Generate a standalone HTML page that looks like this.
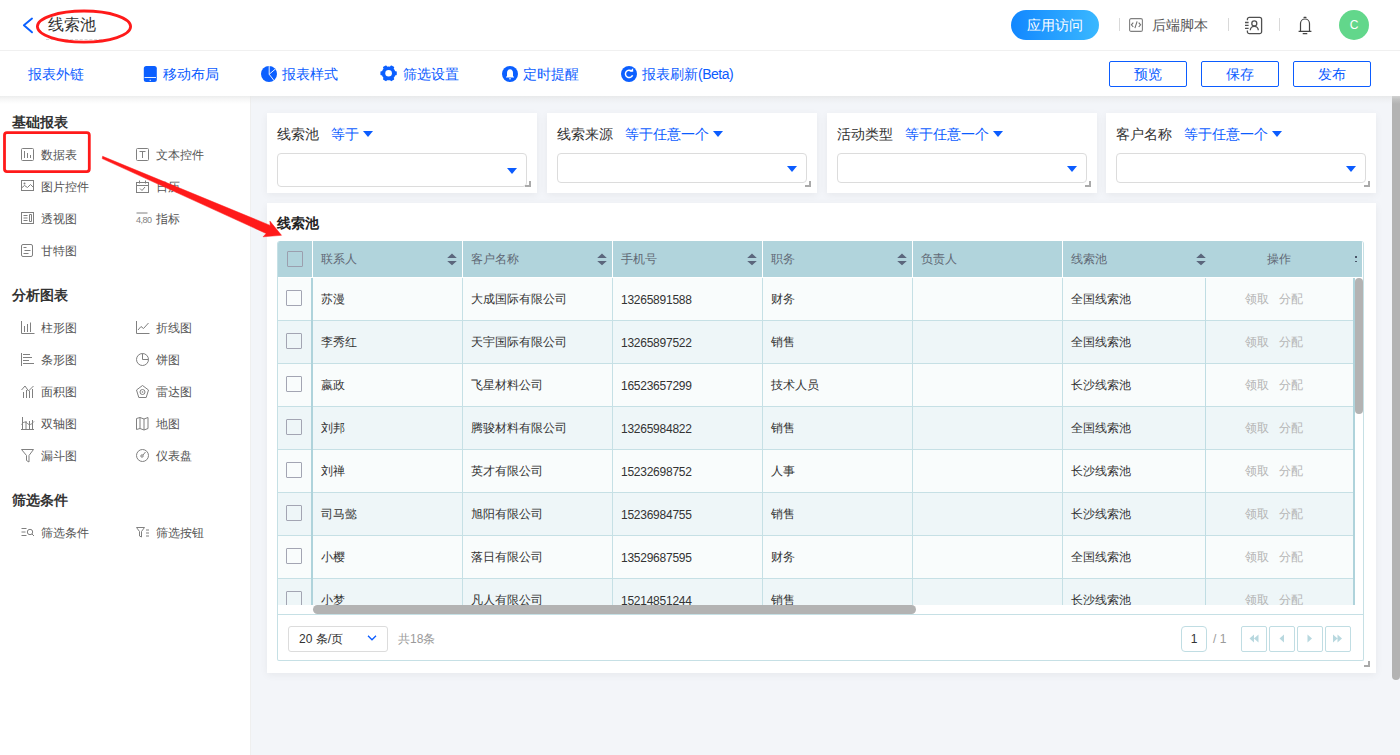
<!DOCTYPE html>
<html><head><meta charset="utf-8">
<style>
*{box-sizing:border-box;margin:0;padding:0}
html,body{width:1400px;height:755px;overflow:hidden}
body{position:relative;background:#f3f5f9;font-family:"Liberation Sans",sans-serif;color:#333;font-size:12px}
.a{position:absolute;white-space:nowrap}
#hdr{left:0;top:0;width:1400px;height:51px;background:#fff;border-bottom:1px solid #f0f0f0}
#tb{left:0;top:51px;width:1400px;height:45px;background:#fff;z-index:2}
#tbs{left:0;top:96px;width:1400px;height:8px;z-index:3;background:linear-gradient(rgba(226,227,227,0.65),rgba(226,227,227,0.3) 40%,rgba(226,227,227,0))}
#side{left:0;top:96px;width:251px;height:659px;background:#fff;border-right:1px solid #efefef}
.tbt{font-size:14px;color:#0b5cff;line-height:20px;top:13px}
.btn{top:10px;width:78px;height:26px;border:1px solid #0b5cff;border-radius:2px;font-size:14px;color:#0b5cff;text-align:center;line-height:24px}
.sec{font-size:14px;font-weight:bold;color:#333;line-height:20px;left:12px}
.it{font-size:12px;color:#555;line-height:16px}
svg{overflow:visible}
.card{background:#fff;box-shadow:0 2px 8px rgba(0,0,0,0.055)}
</style></head><body>

<!-- header -->
<div id="hdr" class="a">
  <svg class="a" style="left:22px;top:17px" width="12" height="17" viewBox="0 0 12 17"><path d="M10 1.6 L1.9 8.3 L10 15.3" fill="none" stroke="#0b60ff" stroke-width="1.9" stroke-linecap="round" stroke-linejoin="round"/></svg>
  <div class="a" style="left:48px;top:14px;font-size:16px;line-height:22px;color:#333">线索池</div>
  <div class="a" style="left:46px;top:39px;width:56px;border-top:1px dashed #d8d8d8"></div>
  <div class="a" style="left:1011px;top:10px;width:88px;height:30px;border-radius:15px;background:linear-gradient(90deg,#1287ff,#3ab8ff);color:#fff;font-size:14px;line-height:30px;text-align:center">应用访问</div>
  <div class="a" style="left:1119px;top:18px;width:1px;height:13px;background:#d9d9d9"></div>
  <div class="a" style="left:1152px;top:15px;font-size:14px;line-height:20px;color:#555">后端脚本</div>
  <div class="a" style="left:1228px;top:18px;width:1px;height:13px;background:#d9d9d9"></div>
  <div class="a" style="left:1279px;top:18px;width:1px;height:13px;background:#d9d9d9"></div>

  <svg class="a" style="left:1129px;top:18px" width="14" height="14" viewBox="0 0 14 14"><rect x="0.6" y="0.6" width="12.8" height="12.8" rx="1.5" fill="none" stroke="#808080" stroke-width="1.1"/><path d="M4.3 4.6L2.4 6.8L4.3 9M9.7 4.6L11.6 6.8L9.7 9M8.1 3.4L5.9 10.2" fill="none" stroke="#707070" stroke-width="1.1"/></svg>
  <svg class="a" style="left:1244px;top:16px" width="19" height="19" viewBox="0 0 19 19"><path d="M3.4 4.2V3.3A2 2 0 0 1 5.4 1.3H15.6A2 2 0 0 1 17.6 3.3V15.7A2 2 0 0 1 15.6 17.7H5.4A2 2 0 0 1 3.4 15.7V14.6" fill="none" stroke="#505050" stroke-width="1.3"/><path d="M1 6.5H4.6M1 9.4H4.6M1 12.3H4.6" stroke="#505050" stroke-width="1.3"/><circle cx="10.3" cy="7.4" r="2.5" fill="none" stroke="#505050" stroke-width="1.3"/><path d="M6.3 14.3A4 4 0 0 1 14.3 14.3" fill="none" stroke="#505050" stroke-width="1.3"/></svg>
  <svg class="a" style="left:1297px;top:16px" width="16" height="19" viewBox="0 0 16 19"><path d="M7 1.3h2" stroke="#444" stroke-width="1.2" stroke-linecap="round"/><path d="M3.5 14.8V7.5A4.5 4.5 0 0 1 12.5 7.5V14.8M1.6 15.3H14.4" fill="none" stroke="#444" stroke-width="1.2"/><path d="M6.2 17.7h3.6" stroke="#444" stroke-width="1.2" stroke-linecap="round"/></svg>
  <div class="a" style="left:1339px;top:10px;width:30px;height:30px;border-radius:50%;background:#62d78b;color:#fff;font-size:12px;line-height:30px;text-align:center">C</div>
</div>

<!-- toolbar -->
<div id="tb" class="a">

  <svg class="a" style="left:143px;top:15px" width="14" height="16" viewBox="0 0 14 16"><rect x="0.8" y="0" width="13" height="16" rx="2.5" fill="#0b5fff"/><path d="M1.5 11.5H13" stroke="#fff" stroke-width="0.9"/><path d="M6.6 14.3H8" stroke="#fff" stroke-width="0.9"/></svg>
  <svg class="a" style="left:261px;top:15px" width="16" height="16" viewBox="0 0 16 16"><circle cx="8" cy="8" r="8" fill="#0b5fff"/><path d="M8.2 0V8.3L14.2 3.2M8.2 8.3L13 14.5" fill="none" stroke="#fff" stroke-width="0.9"/></svg>
  <svg class="a" style="left:380px;top:15px" width="18" height="16" viewBox="0 0 18 16"><path d="M13.97 10.40 L14.62 8.80 L16.08 8.62 L16.08 5.98 L14.62 5.80 L13.97 4.20 L12.91 2.84 L13.49 1.48 L11.20 0.16 L10.31 1.34 L8.60 1.10 L6.89 1.34 L6.00 0.16 L3.71 1.48 L4.29 2.84 L3.23 4.20 L2.58 5.80 L1.12 5.98 L1.12 8.62 L2.58 8.80 L3.23 10.40 L4.29 11.76 L3.71 13.12 L6.00 14.44 L6.89 13.26 L8.60 13.50 L10.31 13.26 L11.20 14.44 L13.49 13.12 L12.91 11.76Z" fill="#0b5fff" stroke="#0b5fff" stroke-width="1.4" stroke-linejoin="round"/><circle cx="8.6" cy="7.3" r="3.3" fill="#fff"/></svg>
  <svg class="a" style="left:502px;top:15px" width="16" height="16" viewBox="0 0 16 16"><circle cx="8" cy="8" r="8" fill="#0b5fff"/><path d="M8 3.2C6 3.2 5 5 5 7V10.5H4V11.6H12V10.5H11V7C11 5 10 3.2 8 3.2Z" fill="#fff"/><rect x="7.1" y="12.3" width="1.8" height="1" fill="#fff"/></svg>
  <svg class="a" style="left:621px;top:15px" width="16" height="16" viewBox="0 0 16 16"><circle cx="8" cy="8" r="8" fill="#0b5fff"/><path d="M11.6 9.2A3.7 3.7 0 1 1 10.8 5.3" fill="none" stroke="#fff" stroke-width="1.5"/><path d="M8.4 5.5L12.2 5.7L12.1 2.2Z" fill="#fff"/></svg>
  <div class="a tbt" style="left:28px">报表外链</div>
  <div class="a tbt" style="left:163px">移动布局</div>
  <div class="a tbt" style="left:282px">报表样式</div>
  <div class="a tbt" style="left:403px">筛选设置</div>
  <div class="a tbt" style="left:523px">定时提醒</div>
  <div class="a tbt" style="left:642px">报表刷新<span style="letter-spacing:-0.5px">(Beta)</span></div>
  <div class="a btn" style="left:1109px">预览</div>
  <div class="a btn" style="left:1201px">保存</div>
  <div class="a btn" style="left:1293px">发布</div>
</div>

<div id="tbs" class="a"></div>
<!-- sidebar -->
<div id="side" class="a">
  <div class="a sec" style="top:16px">基础报表</div>
  <div class="a sec" style="top:189px">分析图表</div>
  <div class="a sec" style="top:394px">筛选条件</div>
  <svg class="a" style="left:21px;top:52px" width="14" height="14" viewBox="0 0 14 14"><rect x="0.5" y="0.5" width="12" height="12" rx="1" fill="none" stroke="#808080"/><path d="M3.5 3v7M6.5 5v5M9.5 7v3" stroke="#808080"/></svg>
  <div class="a it" style="left:41px;top:51px">数据表</div>
  <svg class="a" style="left:136px;top:52px" width="14" height="14" viewBox="0 0 14 14"><rect x="0.5" y="0.5" width="12" height="12" rx="1" fill="none" stroke="#808080"/><path d="M3.5 3.5h6M6.5 3.5v6.5" stroke="#808080"/></svg>
  <div class="a it" style="left:156px;top:51px">文本控件</div>
  <svg class="a" style="left:21px;top:84px" width="14" height="14" viewBox="0 0 14 14"><rect x="0.5" y="0.5" width="12" height="10" fill="none" stroke="#808080"/><circle cx="3.5" cy="3.5" r="1" fill="#808080"/><path d="M0.5 8l3-2.5 3 2 3-3 3 3" fill="none" stroke="#808080"/></svg>
  <div class="a it" style="left:41px;top:83px">图片控件</div>
  <svg class="a" style="left:136px;top:84px" width="14" height="14" viewBox="0 0 14 14"><rect x="0.5" y="2.5" width="12" height="10" fill="none" stroke="#808080"/><path d="M3.5 0.5v3M9.5 0.5v3M0.5 5.5h12M4 8.5l2 2 3-3.5" fill="none" stroke="#808080"/></svg>
  <div class="a it" style="left:156px;top:83px">日历</div>
  <svg class="a" style="left:21px;top:116px" width="14" height="14" viewBox="0 0 14 14"><rect x="0.5" y="0.5" width="12" height="11" fill="none" stroke="#808080"/><path d="M2.5 3.5h4M2.5 6h4M2.5 8.5h4M8.5 2.5h2v7h-2z" fill="none" stroke="#808080"/></svg>
  <div class="a it" style="left:41px;top:115px">透视图</div>
  <svg class="a" style="left:136px;top:116px" width="14" height="14" viewBox="0 0 14 14"><path d="M0.5 1h11" stroke="#808080"/><text x="0" y="11" font-size="9" fill="#808080" font-family="Liberation Sans" letter-spacing="-0.5">4,80</text></svg>
  <div class="a it" style="left:156px;top:115px">指标</div>
  <svg class="a" style="left:21px;top:148px" width="14" height="14" viewBox="0 0 14 14"><rect x="0.5" y="0.5" width="11" height="12" rx="1.5" fill="none" stroke="#808080"/><path d="M2.5 3.5h3M3.5 6.5h6M2.5 9.5h5" stroke="#808080"/></svg>
  <div class="a it" style="left:41px;top:147px">甘特图</div>
  <svg class="a" style="left:21px;top:225px" width="14" height="14" viewBox="0 0 14 14"><path d="M0.5 0v12.5h13M3.5 5v6M6.5 3v8M9.5 1.5v9.5" fill="none" stroke="#808080"/></svg>
  <div class="a it" style="left:41px;top:224px">柱形图</div>
  <svg class="a" style="left:136px;top:225px" width="14" height="14" viewBox="0 0 14 14"><path d="M0.5 0v12.5h13M2 9l3-3.5 2.5 2 5-5.5" fill="none" stroke="#808080"/></svg>
  <div class="a it" style="left:156px;top:224px">折线图</div>
  <svg class="a" style="left:21px;top:257px" width="14" height="14" viewBox="0 0 14 14"><path d="M0.5 0v13M2 1.5h7M2 4.5h9M2 7.5h6M2 10.5h11" fill="none" stroke="#808080"/></svg>
  <div class="a it" style="left:41px;top:256px">条形图</div>
  <svg class="a" style="left:136px;top:257px" width="14" height="14" viewBox="0 0 14 14"><circle cx="6.5" cy="6.5" r="6" fill="none" stroke="#808080"/><path d="M6.5 0.5v6h6" fill="none" stroke="#808080"/></svg>
  <div class="a it" style="left:156px;top:256px">饼图</div>
  <svg class="a" style="left:21px;top:289px" width="14" height="14" viewBox="0 0 14 14"><path d="M0.5 5l3.5-4 3.5 5 5-5M2.5 7v6M5.5 5v8M8.5 6v7M11.5 4v9" fill="none" stroke="#808080"/></svg>
  <div class="a it" style="left:41px;top:288px">面积图</div>
  <svg class="a" style="left:136px;top:289px" width="14" height="14" viewBox="0 0 14 14"><path d="M6.5 0.5l6 4.5-2.3 7.5h-7.4l-2.3-7.5z" fill="none" stroke="#808080"/><circle cx="6.5" cy="7" r="2.5" fill="none" stroke="#808080"/><circle cx="6.5" cy="7" r="0.8" fill="#808080"/></svg>
  <div class="a it" style="left:156px;top:288px">雷达图</div>
  <svg class="a" style="left:21px;top:321px" width="14" height="14" viewBox="0 0 14 14"><path d="M0 12.5h13M1.5 0v12M5 4v8M8.5 4v8M11.5 3v9M0.5 7.5c2-3 4-3 6-1s4 1 6.5-2" fill="none" stroke="#808080"/></svg>
  <div class="a it" style="left:41px;top:320px">双轴图</div>
  <svg class="a" style="left:136px;top:321px" width="14" height="14" viewBox="0 0 14 14"><path d="M0.5 1.5l3.5-1 4 1.5 4-1.5v11l-4 1.5-4-1.5-3.5 1z M4 0.5v11 M8 2v11" fill="none" stroke="#808080"/></svg>
  <div class="a it" style="left:156px;top:320px">地图</div>
  <svg class="a" style="left:21px;top:353px" width="14" height="14" viewBox="0 0 14 14"><path d="M0.5 0.5h12l-4.5 6v6.5l-2.5-1.5v-5z" fill="none" stroke="#808080" stroke-linejoin="round"/></svg>
  <div class="a it" style="left:41px;top:352px">漏斗图</div>
  <svg class="a" style="left:136px;top:353px" width="14" height="14" viewBox="0 0 14 14"><circle cx="6.5" cy="6.5" r="6" fill="none" stroke="#808080"/><circle cx="6" cy="7" r="1.2" fill="none" stroke="#808080"/><path d="M7 6l2.5-3" stroke="#808080"/></svg>
  <div class="a it" style="left:156px;top:352px">仪表盘</div>
  <svg class="a" style="left:21px;top:430px" width="14" height="14" viewBox="0 0 14 14"><path d="M0.5 2.5h5M0.5 6h4M0.5 9.5h5" stroke="#808080"/><circle cx="9" cy="6" r="2.7" fill="none" stroke="#808080"/><path d="M11 8l2 2" stroke="#808080"/></svg>
  <div class="a it" style="left:41px;top:429px">筛选条件</div>
  <svg class="a" style="left:136px;top:430px" width="14" height="14" viewBox="0 0 14 14"><path d="M0.5 1.5h8l-3 4v5.5l-2-1v-4.5z" fill="none" stroke="#808080"/><path d="M10 4h3M10 7h3M10 10h3" stroke="#808080"/></svg>
  <div class="a it" style="left:156px;top:429px">筛选按钮</div>
</div>

<!-- filters -->
<div class="a card" style="left:267px;top:113px;width:270px;height:80px">
  <div class="a" style="left:10px;top:11px;font-size:14px;line-height:20px;color:#333">线索池</div>
  <div class="a" style="left:64px;top:11px;font-size:14px;line-height:20px;color:#0b5cff">等于</div>
  <svg class="a" style="left:96px;top:18px" width="10" height="6" viewBox="0 0 10 6"><path d="M0 0h10L5 6z" fill="#0b5cff"/></svg>
  <div class="a" style="left:10px;top:40px;width:250px;height:34px;border:1px solid #dcdcdc;border-radius:4px"></div>
  <svg class="a" style="left:240px;top:54.6px" width="10" height="6" viewBox="0 0 10 6"><path d="M0 0h10L5 6z" fill="#0b5cff"/></svg>
  <div class="a" style="left:258px;top:68px;width:6px;height:6px;border-right:2px solid #aaa;border-bottom:2px solid #aaa"></div>
</div>
<div class="a card" style="left:547px;top:113px;width:270px;height:80px">
  <div class="a" style="left:10px;top:11px;font-size:14px;line-height:20px;color:#333">线索来源</div>
  <div class="a" style="left:78px;top:11px;font-size:14px;line-height:20px;color:#0b5cff">等于任意一个</div>
  <svg class="a" style="left:166px;top:18px" width="10" height="6" viewBox="0 0 10 6"><path d="M0 0h10L5 6z" fill="#0b5cff"/></svg>
  <div class="a" style="left:10px;top:40px;width:250px;height:30px;border:1px solid #dcdcdc;border-radius:4px"></div>
  <svg class="a" style="left:240px;top:52.8px" width="10" height="6" viewBox="0 0 10 6"><path d="M0 0h10L5 6z" fill="#0b5cff"/></svg>
  <div class="a" style="left:258px;top:68px;width:6px;height:6px;border-right:2px solid #aaa;border-bottom:2px solid #aaa"></div>
</div>
<div class="a card" style="left:827px;top:113px;width:270px;height:80px">
  <div class="a" style="left:10px;top:11px;font-size:14px;line-height:20px;color:#333">活动类型</div>
  <div class="a" style="left:78px;top:11px;font-size:14px;line-height:20px;color:#0b5cff">等于任意一个</div>
  <svg class="a" style="left:166px;top:18px" width="10" height="6" viewBox="0 0 10 6"><path d="M0 0h10L5 6z" fill="#0b5cff"/></svg>
  <div class="a" style="left:10px;top:40px;width:250px;height:30px;border:1px solid #dcdcdc;border-radius:4px"></div>
  <svg class="a" style="left:240px;top:52.8px" width="10" height="6" viewBox="0 0 10 6"><path d="M0 0h10L5 6z" fill="#0b5cff"/></svg>
  <div class="a" style="left:258px;top:68px;width:6px;height:6px;border-right:2px solid #aaa;border-bottom:2px solid #aaa"></div>
</div>
<div class="a card" style="left:1106px;top:113px;width:270px;height:80px">
  <div class="a" style="left:10px;top:11px;font-size:14px;line-height:20px;color:#333">客户名称</div>
  <div class="a" style="left:78px;top:11px;font-size:14px;line-height:20px;color:#0b5cff">等于任意一个</div>
  <svg class="a" style="left:166px;top:18px" width="10" height="6" viewBox="0 0 10 6"><path d="M0 0h10L5 6z" fill="#0b5cff"/></svg>
  <div class="a" style="left:10px;top:40px;width:250px;height:30px;border:1px solid #dcdcdc;border-radius:4px"></div>
  <svg class="a" style="left:240px;top:52.8px" width="10" height="6" viewBox="0 0 10 6"><path d="M0 0h10L5 6z" fill="#0b5cff"/></svg>
  <div class="a" style="left:258px;top:68px;width:6px;height:6px;border-right:2px solid #aaa;border-bottom:2px solid #aaa"></div>
</div>

<!-- table card -->
<div class="a card" style="left:267px;top:203px;width:1109px;height:470px">
  <div class="a" style="left:10px;top:10px;font-size:14px;font-weight:bold;line-height:20px;color:#222">线索池</div>
  <div class="a" style="left:10px;top:38px;width:1087px;height:420px;border:1px solid #c6e0e5;border-top:none;border-radius:3px 3px 2px 2px;overflow:hidden;background:#fff">
    <div class="a" style="left:0;top:0;width:1087px;height:36px;background:#b1d4dc"></div>
    <div class="a" style="left:1084px;top:0;width:1px;height:36px;background:#fff"></div>
    <div class="a" style="left:34px;top:0;width:1px;height:36px;background:#fff"></div>
    <div class="a" style="left:184px;top:0;width:1px;height:36px;background:#fff"></div>
    <div class="a" style="left:334px;top:0;width:1px;height:36px;background:#fff"></div>
    <div class="a" style="left:484px;top:0;width:1px;height:36px;background:#fff"></div>
    <div class="a" style="left:634px;top:0;width:1px;height:36px;background:#fff"></div>
    <div class="a" style="left:784px;top:0;width:1px;height:36px;background:#fff"></div>
    <div class="a" style="left:9px;top:10px;width:16px;height:16px;border:1px solid #9b9fae;border-radius:1px"></div>
    <div class="a" style="left:43px;top:10px;font-size:12px;line-height:16px;color:#606874">联系人</div>
    <svg class="a" style="left:169px;top:12px" width="10" height="13" viewBox="0 0 10 13"><path d="M0.2 5L5 0.5L9.8 5z M0.2 8h9.6L5 12.3z" fill="#5b667c"/></svg>
    <div class="a" style="left:193px;top:10px;font-size:12px;line-height:16px;color:#606874">客户名称</div>
    <svg class="a" style="left:319px;top:12px" width="10" height="13" viewBox="0 0 10 13"><path d="M0.2 5L5 0.5L9.8 5z M0.2 8h9.6L5 12.3z" fill="#5b667c"/></svg>
    <div class="a" style="left:343px;top:10px;font-size:12px;line-height:16px;color:#606874">手机号</div>
    <svg class="a" style="left:469px;top:12px" width="10" height="13" viewBox="0 0 10 13"><path d="M0.2 5L5 0.5L9.8 5z M0.2 8h9.6L5 12.3z" fill="#5b667c"/></svg>
    <div class="a" style="left:493px;top:10px;font-size:12px;line-height:16px;color:#606874">职务</div>
    <svg class="a" style="left:619px;top:12px" width="10" height="13" viewBox="0 0 10 13"><path d="M0.2 5L5 0.5L9.8 5z M0.2 8h9.6L5 12.3z" fill="#5b667c"/></svg>
    <div class="a" style="left:643px;top:10px;font-size:12px;line-height:16px;color:#606874">负责人</div>
    <div class="a" style="left:793px;top:10px;font-size:12px;line-height:16px;color:#606874">线索池</div>
    <svg class="a" style="left:918px;top:12px" width="10" height="13" viewBox="0 0 10 13"><path d="M0.2 5L5 0.5L9.8 5z M0.2 8h9.6L5 12.3z" fill="#5b667c"/></svg>
    <div class="a" style="left:927px;top:10px;width:148px;text-align:center;font-size:12px;line-height:16px;color:#606874">操作</div>
    <div class="a" style="left:1077px;top:15px;width:1.6px;height:1.6px;background:#4a5468"></div>
    <div class="a" style="left:1077px;top:19.5px;width:1.6px;height:1.6px;background:#4a5468"></div>
    <div class="a" style="left:0;top:36px;width:1077px;height:328px;overflow:hidden">
      <div class="a" style="left:0;top:1px;width:1077px;height:43px;background:#f9fcfc;border-bottom:1px solid #c6e0e5"></div>
      <div class="a" style="left:8px;top:13px;width:16px;height:16px;border:1px solid #a3a5b3;border-radius:1px"></div>
      <div class="a" style="left:43px;top:14px;font-size:12px;line-height:16px;color:#333">苏漫</div>
      <div class="a" style="left:193px;top:14px;font-size:12px;line-height:16px;color:#333">大成国际有限公司</div>
      <div class="a" style="left:343px;top:15px;font-size:12px;line-height:16px;color:#333;letter-spacing:-0.25px">13265891588</div>
      <div class="a" style="left:493px;top:14px;font-size:12px;line-height:16px;color:#333">财务</div>
      <div class="a" style="left:793px;top:14px;font-size:12px;line-height:16px;color:#333">全国线索池</div>
      <div class="a" style="left:967px;top:14px;font-size:12px;line-height:16px;color:#b5b5b5">领取&nbsp;&nbsp;&nbsp;分配</div>
      <div class="a" style="left:0;top:44px;width:1077px;height:43px;background:#eef6f8;border-bottom:1px solid #c6e0e5"></div>
      <div class="a" style="left:8px;top:56px;width:16px;height:16px;border:1px solid #a3a5b3;border-radius:1px"></div>
      <div class="a" style="left:43px;top:57px;font-size:12px;line-height:16px;color:#333">李秀红</div>
      <div class="a" style="left:193px;top:57px;font-size:12px;line-height:16px;color:#333">天宇国际有限公司</div>
      <div class="a" style="left:343px;top:58px;font-size:12px;line-height:16px;color:#333;letter-spacing:-0.25px">13265897522</div>
      <div class="a" style="left:493px;top:57px;font-size:12px;line-height:16px;color:#333">销售</div>
      <div class="a" style="left:793px;top:57px;font-size:12px;line-height:16px;color:#333">全国线索池</div>
      <div class="a" style="left:967px;top:57px;font-size:12px;line-height:16px;color:#b5b5b5">领取&nbsp;&nbsp;&nbsp;分配</div>
      <div class="a" style="left:0;top:87px;width:1077px;height:43px;background:#f9fcfc;border-bottom:1px solid #c6e0e5"></div>
      <div class="a" style="left:8px;top:99px;width:16px;height:16px;border:1px solid #a3a5b3;border-radius:1px"></div>
      <div class="a" style="left:43px;top:100px;font-size:12px;line-height:16px;color:#333">嬴政</div>
      <div class="a" style="left:193px;top:100px;font-size:12px;line-height:16px;color:#333">飞星材料公司</div>
      <div class="a" style="left:343px;top:101px;font-size:12px;line-height:16px;color:#333;letter-spacing:-0.25px">16523657299</div>
      <div class="a" style="left:493px;top:100px;font-size:12px;line-height:16px;color:#333">技术人员</div>
      <div class="a" style="left:793px;top:100px;font-size:12px;line-height:16px;color:#333">长沙线索池</div>
      <div class="a" style="left:967px;top:100px;font-size:12px;line-height:16px;color:#b5b5b5">领取&nbsp;&nbsp;&nbsp;分配</div>
      <div class="a" style="left:0;top:130px;width:1077px;height:43px;background:#eef6f8;border-bottom:1px solid #c6e0e5"></div>
      <div class="a" style="left:8px;top:142px;width:16px;height:16px;border:1px solid #a3a5b3;border-radius:1px"></div>
      <div class="a" style="left:43px;top:143px;font-size:12px;line-height:16px;color:#333">刘邦</div>
      <div class="a" style="left:193px;top:143px;font-size:12px;line-height:16px;color:#333">腾骏材料有限公司</div>
      <div class="a" style="left:343px;top:144px;font-size:12px;line-height:16px;color:#333;letter-spacing:-0.25px">13265984822</div>
      <div class="a" style="left:493px;top:143px;font-size:12px;line-height:16px;color:#333">销售</div>
      <div class="a" style="left:793px;top:143px;font-size:12px;line-height:16px;color:#333">全国线索池</div>
      <div class="a" style="left:967px;top:143px;font-size:12px;line-height:16px;color:#b5b5b5">领取&nbsp;&nbsp;&nbsp;分配</div>
      <div class="a" style="left:0;top:173px;width:1077px;height:43px;background:#f9fcfc;border-bottom:1px solid #c6e0e5"></div>
      <div class="a" style="left:8px;top:185px;width:16px;height:16px;border:1px solid #a3a5b3;border-radius:1px"></div>
      <div class="a" style="left:43px;top:186px;font-size:12px;line-height:16px;color:#333">刘禅</div>
      <div class="a" style="left:193px;top:186px;font-size:12px;line-height:16px;color:#333">英才有限公司</div>
      <div class="a" style="left:343px;top:187px;font-size:12px;line-height:16px;color:#333;letter-spacing:-0.25px">15232698752</div>
      <div class="a" style="left:493px;top:186px;font-size:12px;line-height:16px;color:#333">人事</div>
      <div class="a" style="left:793px;top:186px;font-size:12px;line-height:16px;color:#333">长沙线索池</div>
      <div class="a" style="left:967px;top:186px;font-size:12px;line-height:16px;color:#b5b5b5">领取&nbsp;&nbsp;&nbsp;分配</div>
      <div class="a" style="left:0;top:216px;width:1077px;height:43px;background:#eef6f8;border-bottom:1px solid #c6e0e5"></div>
      <div class="a" style="left:8px;top:228px;width:16px;height:16px;border:1px solid #a3a5b3;border-radius:1px"></div>
      <div class="a" style="left:43px;top:229px;font-size:12px;line-height:16px;color:#333">司马懿</div>
      <div class="a" style="left:193px;top:229px;font-size:12px;line-height:16px;color:#333">旭阳有限公司</div>
      <div class="a" style="left:343px;top:230px;font-size:12px;line-height:16px;color:#333;letter-spacing:-0.25px">15236984755</div>
      <div class="a" style="left:493px;top:229px;font-size:12px;line-height:16px;color:#333">销售</div>
      <div class="a" style="left:793px;top:229px;font-size:12px;line-height:16px;color:#333">长沙线索池</div>
      <div class="a" style="left:967px;top:229px;font-size:12px;line-height:16px;color:#b5b5b5">领取&nbsp;&nbsp;&nbsp;分配</div>
      <div class="a" style="left:0;top:259px;width:1077px;height:43px;background:#f9fcfc;border-bottom:1px solid #c6e0e5"></div>
      <div class="a" style="left:8px;top:271px;width:16px;height:16px;border:1px solid #a3a5b3;border-radius:1px"></div>
      <div class="a" style="left:43px;top:272px;font-size:12px;line-height:16px;color:#333">小樱</div>
      <div class="a" style="left:193px;top:272px;font-size:12px;line-height:16px;color:#333">落日有限公司</div>
      <div class="a" style="left:343px;top:273px;font-size:12px;line-height:16px;color:#333;letter-spacing:-0.25px">13529687595</div>
      <div class="a" style="left:493px;top:272px;font-size:12px;line-height:16px;color:#333">财务</div>
      <div class="a" style="left:793px;top:272px;font-size:12px;line-height:16px;color:#333">全国线索池</div>
      <div class="a" style="left:967px;top:272px;font-size:12px;line-height:16px;color:#b5b5b5">领取&nbsp;&nbsp;&nbsp;分配</div>
      <div class="a" style="left:0;top:302px;width:1077px;height:43px;background:#eef6f8;border-bottom:1px solid #c6e0e5"></div>
      <div class="a" style="left:8px;top:314px;width:16px;height:16px;border:1px solid #a3a5b3;border-radius:1px"></div>
      <div class="a" style="left:43px;top:315px;font-size:12px;line-height:16px;color:#333">小梦</div>
      <div class="a" style="left:193px;top:315px;font-size:12px;line-height:16px;color:#333">凡人有限公司</div>
      <div class="a" style="left:343px;top:316px;font-size:12px;line-height:16px;color:#333;letter-spacing:-0.25px">15214851244</div>
      <div class="a" style="left:493px;top:315px;font-size:12px;line-height:16px;color:#333">销售</div>
      <div class="a" style="left:793px;top:315px;font-size:12px;line-height:16px;color:#333">长沙线索池</div>
      <div class="a" style="left:967px;top:315px;font-size:12px;line-height:16px;color:#b5b5b5">领取&nbsp;&nbsp;&nbsp;分配</div>
      <div class="a" style="left:184px;top:1px;width:1px;height:327px;background:#c6e0e5"></div>
      <div class="a" style="left:334px;top:1px;width:1px;height:327px;background:#c6e0e5"></div>
      <div class="a" style="left:484px;top:1px;width:1px;height:327px;background:#c6e0e5"></div>
      <div class="a" style="left:634px;top:1px;width:1px;height:327px;background:#c6e0e5"></div>
      <div class="a" style="left:784px;top:1px;width:1px;height:327px;background:#c6e0e5"></div>
      <div class="a" style="left:33px;top:1px;width:2px;height:327px;background:#afd3db"></div>
      <div class="a" style="left:927px;top:1px;width:1px;height:327px;background:#c0dde3"></div>
      <div class="a" style="left:1075px;top:1px;width:2px;height:327px;background:#afd3db"></div>
    </div>
    <div class="a" style="left:0;top:364px;width:1087px;height:9px;background:#fff"></div>
    <div class="a" style="left:35px;top:364px;width:603px;height:9px;border-radius:5px;background:#b3b3b3"></div>
    <div class="a" style="left:0;top:373px;width:1087px;height:1px;background:#c6e0e5"></div>
    <div class="a" style="left:1077px;top:36px;width:9px;height:328px;background:#fff"></div>
    <div class="a" style="left:1077px;top:37px;width:8px;height:136px;border-radius:4px;background:#b3b3b3"></div>
    <div class="a" style="left:10px;top:385px;width:100px;height:26px;border:1px solid #dcdcdc;border-radius:3px"></div>
    <div class="a" style="left:21px;top:390px;font-size:12px;line-height:16px;color:#333">20 条/页</div>
    <svg class="a" style="left:89px;top:394px" width="10" height="6" viewBox="0 0 10 6"><path d="M1 0.8L5 4.8L9 0.8" fill="none" stroke="#0b5cff" stroke-width="1.3"/></svg>
    <div class="a" style="left:120px;top:390px;font-size:12px;line-height:16px;color:#9a9a9a">共18条</div>
    <div class="a" style="left:903px;top:385px;width:26px;height:26px;border:1px solid #c0dde3;border-radius:4px;text-align:center;font-size:12px;line-height:24px;color:#333">1</div>
    <div class="a" style="left:935px;top:390px;font-size:12px;line-height:16px;color:#9a9a9a">/ 1</div>
    <div class="a" style="left:963px;top:385px;width:26px;height:26px;border:1px solid #c0dde3;border-radius:2px"></div>
    <svg class="a" style="left:970px;top:393px" width="12" height="9" viewBox="0 0 12 9" fill="#b8d8df"><path d="M6 0.5L1.5 4.5L6 8.5zM10.5 0.5L6 4.5L10.5 8.5z"/></svg>
    <div class="a" style="left:991px;top:385px;width:26px;height:26px;border:1px solid #c0dde3;border-radius:2px"></div>
    <svg class="a" style="left:998px;top:393px" width="12" height="9" viewBox="0 0 12 9" fill="#b8d8df"><path d="M8 0.5L3.5 4.5L8 8.5z"/></svg>
    <div class="a" style="left:1019px;top:385px;width:26px;height:26px;border:1px solid #c0dde3;border-radius:2px"></div>
    <svg class="a" style="left:1026px;top:393px" width="12" height="9" viewBox="0 0 12 9" fill="#b8d8df"><path d="M3.5 0.5L8 4.5L3.5 8.5z"/></svg>
    <div class="a" style="left:1047px;top:385px;width:26px;height:26px;border:1px solid #c0dde3;border-radius:2px"></div>
    <svg class="a" style="left:1054px;top:393px" width="12" height="9" viewBox="0 0 12 9" fill="#b8d8df"><path d="M1 0.5L5.5 4.5L1 8.5zM5.5 0.5L10 4.5L5.5 8.5z"/></svg>
  </div>
  <div class="a" style="left:1097px;top:458px;width:6px;height:6px;border-right:2px solid #aaa;border-bottom:2px solid #aaa"></div>
</div>

<!-- page scrollbar -->
<div class="a" style="left:1392px;top:96px;width:8px;height:584px;background:#b3b3b3;border-radius:0 0 4px 4px"></div>


<!-- annotations -->
<svg class="a" style="left:0;top:0;z-index:50" width="1400" height="755" viewBox="0 0 1400 755">
  <ellipse cx="84" cy="26.6" rx="46.6" ry="15.6" fill="none" stroke="#ff1a1a" stroke-width="2.8"/>
  <rect x="4.5" y="132.6" width="84.8" height="39" rx="2.5" fill="none" stroke="#ff1a1a" stroke-width="2.8"/>
  <path d="M102.6 156.3L270.2 225.4L269.9 221.1L281.5 235.3L263.1 236.8L266.2 233.5L102.2 158.6Z" fill="#ff1a1a" stroke="#ff1a1a" stroke-width="0.5" stroke-linejoin="round"/>
</svg>
</body></html>
